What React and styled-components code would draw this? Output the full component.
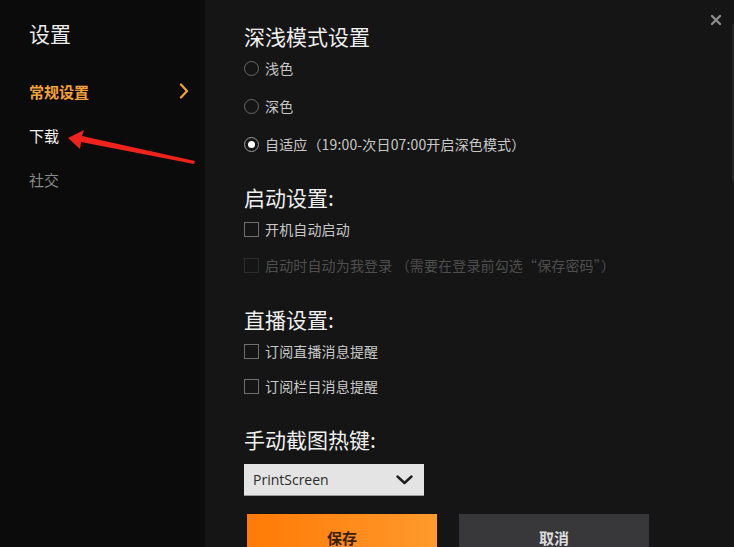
import React from "react";
import styled, { createGlobalStyle } from "styled-components";

const Global = createGlobalStyle`
  html, body { margin: 0; padding: 0; background: #151515; overflow: hidden; }
  body { font-family: "Noto Sans CJK SC", "Noto Sans", sans-serif; }
  * { box-sizing: border-box; }
`;

const Window = styled.div`
  position: relative;
  width: 734px;
  height: 547px;
  display: flex;
  overflow: hidden;
  background: #151515;
`;

const Sidebar = styled.aside`
  width: 205px;
  flex: none;
  background: #0b0b0b;
  padding: 19px 0 0 29px;
  display: flex;
  flex-direction: column;
`;

const SideTitle = styled.h1`
  margin: 0 0 33px;
  font-size: 21px;
  font-weight: 400;
  line-height: 28px;
  color: #ececec;
`;

const NavItem = styled.div`
  display: flex;
  align-items: center;
  justify-content: space-between;
  height: 22px;
  margin-bottom: 22px;
  padding-right: 16px;
  font-size: 15px;
  font-weight: ${(p) => (p.$active ? 700 : 400)};
  color: ${(p) => (p.$active ? "#f7a23a" : p.$dim ? "#8a8a8a" : "#f2f2f2")};
`;

const Main = styled.main`
  flex: 1;
  padding: 22px 0 0 39px;
  display: flex;
  flex-direction: column;
`;

const Section = styled.section`
  display: flex;
  flex-direction: column;
  margin-top: ${(p) => p.$mt || 0}px;
`;

const Heading = styled.h2`
  margin: 0 0 ${(p) => p.$mb || 8}px;
  font-size: 21px;
  font-weight: 400;
  line-height: 28px;
  color: #f0f0f0;
`;

const List = styled.div`
  display: flex;
  flex-direction: column;
  gap: ${(p) => p.$gap}px;
`;

const Option = styled.label`
  display: flex;
  align-items: center;
  gap: 6px;
  height: 20px;
  font-size: 14px;
  letter-spacing: 0.15px;
  color: ${(p) => (p.$disabled ? "#4e4e4e" : "#c8c8c8")};
`;

const Radio = styled.span`
  position: relative;
  width: 15px;
  height: 15px;
  border-radius: 50%;
  border: 1px solid ${(p) => (p.$checked ? "#9a9a9a" : "#6a6a6a")};
  flex: none;
  &::after {
    content: "";
    display: ${(p) => (p.$checked ? "block" : "none")};
    position: absolute;
    left: 3px;
    top: 3px;
    width: 7px;
    height: 7px;
    border-radius: 50%;
    background: #ffffff;
  }
`;

const Box = styled.span`
  width: 15px;
  height: 15px;
  flex: none;
  border: 1px solid ${(p) => (p.$disabled ? "#2c2c2c" : "#6e6e6e")};
`;

const Select = styled.div`
  width: 180px;
  height: 32px;
  background: #e4e4e4;
  border-bottom: 1px solid #9a9a9a;
  display: flex;
  align-items: center;
  justify-content: space-between;
  padding: 0 11px 0 9px;
  font-family: "Open Sans", "Noto Sans", sans-serif;
  font-size: 14px;
  color: #2a2a2a;
`;

const Buttons = styled.div`
  display: flex;
  gap: 22px;
  margin: 18px 0 0 3px;
`;

const Button = styled.button`
  width: 190px;
  height: 46px;
  border: none;
  padding: 0;
  font-family: "Noto Sans CJK SC", sans-serif;
  font-size: 15px;
  font-weight: 700;
  color: ${(p) => (p.$primary ? "#3a1e00" : "#dcdcdc")};
  background: ${(p) =>
    p.$primary ? "linear-gradient(90deg, #ff7a06 0%, #ff9a2c 100%)" : "#38383a"};
`;

const Close = styled.div`
  position: absolute;
  right: 12px;
  top: 7px;
  width: 12px;
  height: 12px;
`;

const ScrollThumb = styled.div`
  position: absolute;
  right: 0;
  top: 24px;
  width: 2px;
  height: 156px;
  background: #272727;
`;

const Annotation = styled.svg`
  position: absolute;
  left: 0;
  top: 0;
  pointer-events: none;
`;

export default function App() {
  return (
    <Window>
      <Global />
      <Sidebar>
        <SideTitle>设置</SideTitle>
        <NavItem $active>
          常规设置
          <svg width="10" height="16" viewBox="0 0 10 16">
            <polyline points="2,1.5 8,8 2,14.5" fill="none" stroke="#f5a233" strokeWidth="2.2" strokeLinecap="round" strokeLinejoin="round" />
          </svg>
        </NavItem>
        <NavItem>下载</NavItem>
        <NavItem $dim>社交</NavItem>
      </Sidebar>
      <Main>
        <Section>
          <Heading>深浅模式设置</Heading>
          <List $gap={18}>
            <Option><Radio />浅色</Option>
            <Option><Radio />深色</Option>
            <Option><Radio $checked />自适应（19:00-次日07:00开启深色模式）</Option>
          </List>
        </Section>
        <Section $mt={29}>
          <Heading>启动设置:</Heading>
          <List $gap={16}>
            <Option><Box />开机自动启动</Option>
            <Option $disabled><Box $disabled />启动时自动为我登录 （需要在登录前勾选“保存密码”）</Option>
          </List>
        </Section>
        <Section $mt={30}>
          <Heading>直播设置:</Heading>
          <List $gap={15}>
            <Option><Box />订阅直播消息提醒</Option>
            <Option><Box />订阅栏目消息提醒</Option>
          </List>
        </Section>
        <Section $mt={29}>
          <Heading $mb={11}>手动截图热键:</Heading>
          <Select>
            PrintScreen
            <svg width="17" height="10" viewBox="0 0 17 10">
              <polyline points="1.5,1.5 8.5,8 15.5,1.5" fill="none" stroke="#1e1e1e" strokeWidth="2.4" strokeLinecap="round" strokeLinejoin="round" />
            </svg>
          </Select>
        </Section>
        <Buttons>
          <Button $primary>保存</Button>
          <Button>取消</Button>
        </Buttons>
      </Main>
      <Close>
        <svg width="12" height="12" viewBox="0 0 12 12">
          <path d="M2 2 L10 10 M10 2 L2 10" stroke="#8c8c8c" strokeWidth="2.4" strokeLinecap="round" />
        </svg>
      </Close>
      <ScrollThumb />
      <Annotation width="734" height="547" viewBox="0 0 734 547">
        <polygon points="68,138 84,130 82,136 195,161 194,164 81,142 80,149" fill="#f0231c" />
      </Annotation>
    </Window>
  );
}
